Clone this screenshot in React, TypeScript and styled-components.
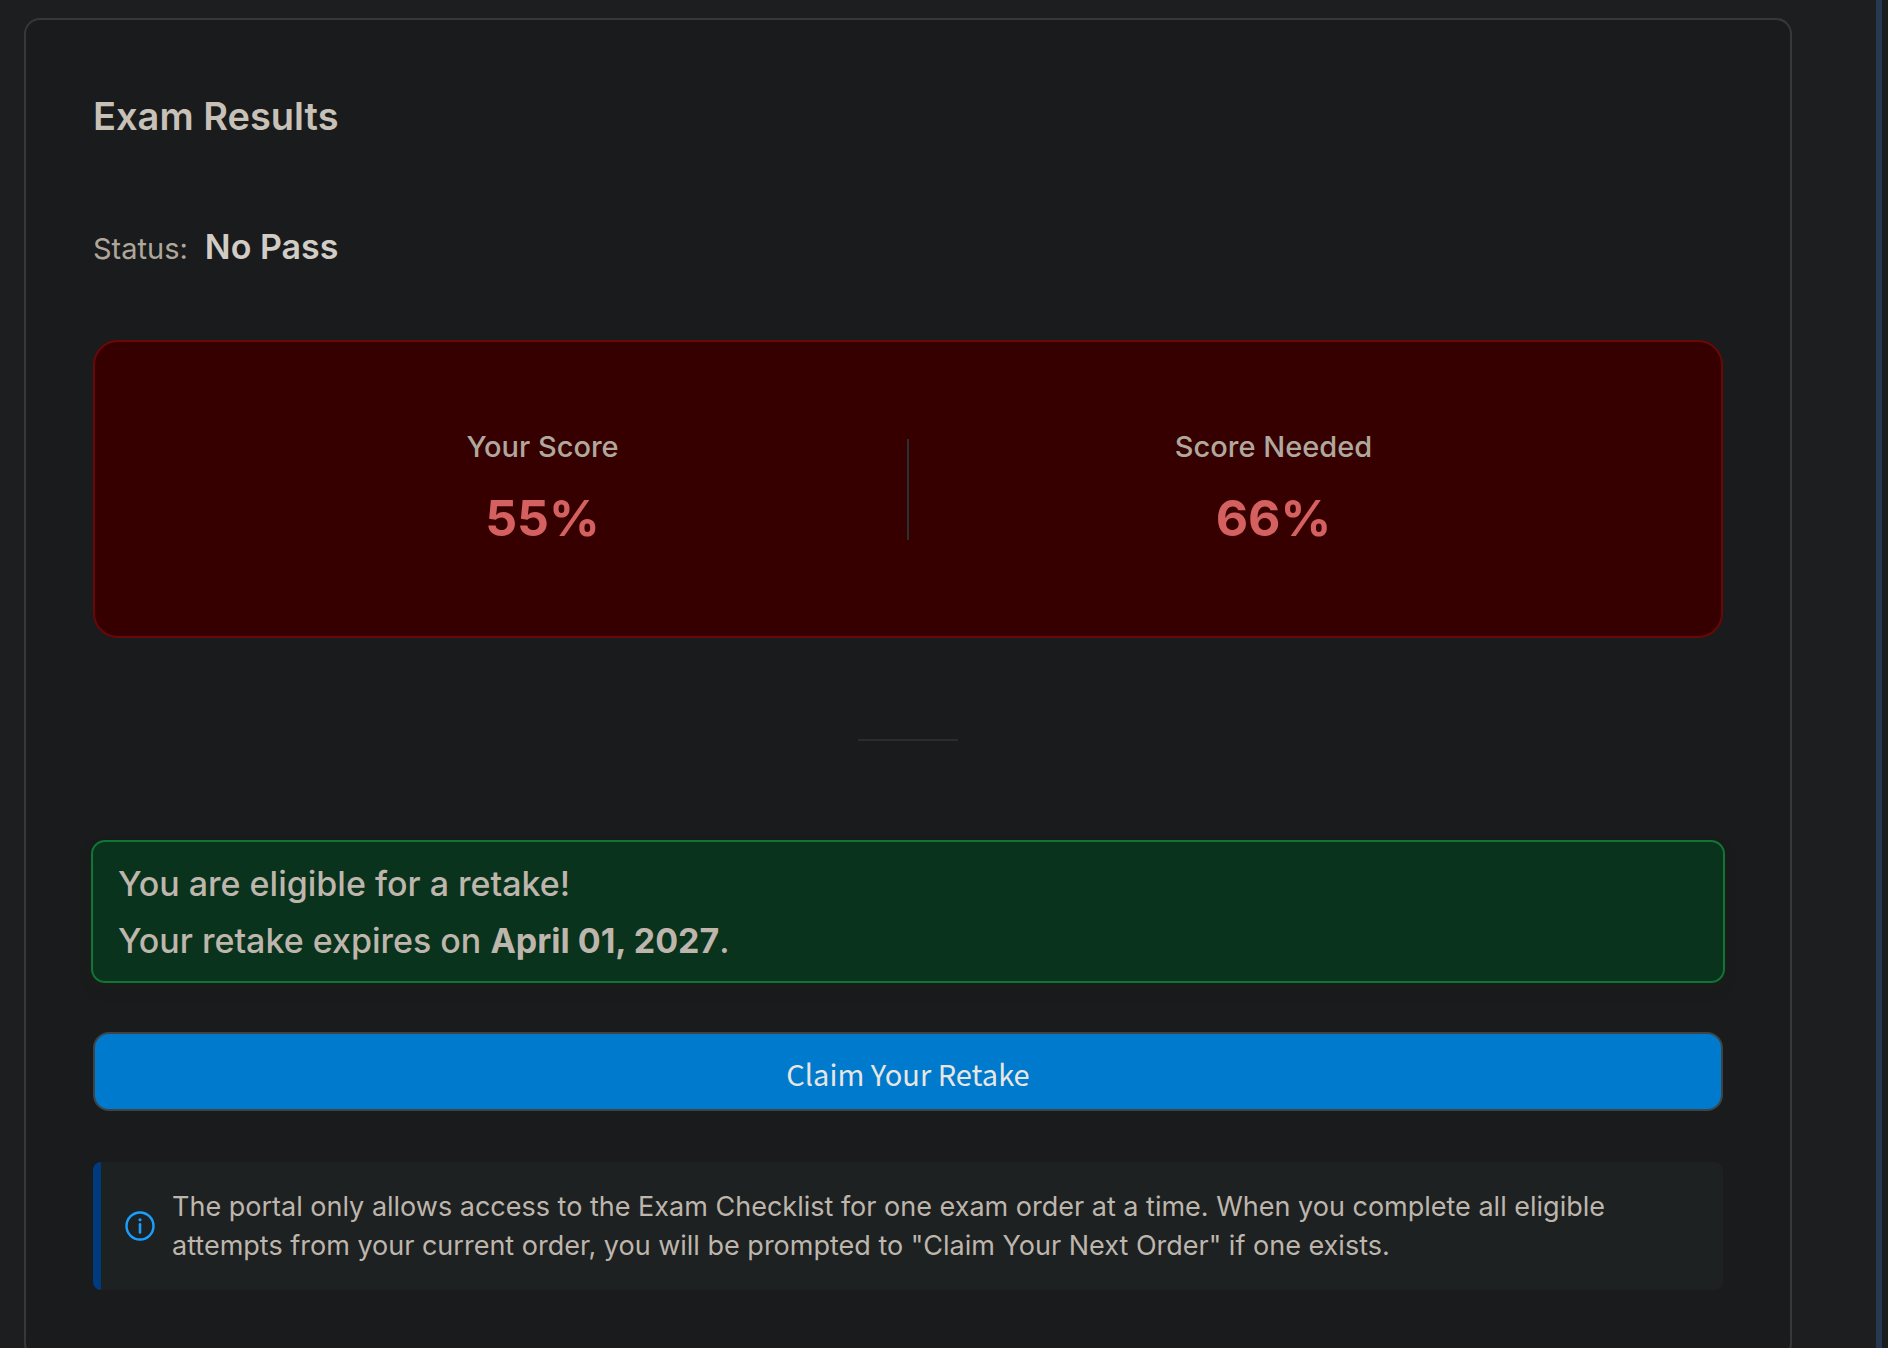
import React from "react";
import styled, { createGlobalStyle } from "styled-components";

const GlobalStyle = createGlobalStyle`
  *, *::before, *::after { box-sizing: border-box; }
  body {
    margin: 0;
    background: #1d1e20;
    color: #c8c1b8;
    font-family: Inter, "Liberation Sans", sans-serif;
  }
`;

const Page = styled.div`
  display: flex;
  height: 100vh;
  overflow: hidden;
  background: #1d1e20;
`;

const Main = styled.main`
  flex: 1;
  min-width: 0;
  padding: 18px 84px 18px 24px;
`;

const Rail = styled.aside`
  flex: none;
  width: 12px;
  border-left: 6px solid #263850;
  background: #1b1c1d;
`;

const Card = styled.section`
  display: flex;
  flex-direction: column;
  padding: 67px;
  border: 2px solid #363839;
  border-radius: 16px;
  background: #1a1b1c;
`;

const Title = styled.h1`
  margin: 0;
  font-size: 38px;
  font-weight: 600;
  line-height: 58px;
`;

const Status = styled.p`
  display: flex;
  align-items: baseline;
  gap: 17px;
  margin: 75px 0 65px;
  line-height: 53px;
`;

const StatusLabel = styled.span`
  color: #afa79b;
  font-size: 29px;
`;

const StatusValue = styled.strong`
  color: #d1ccc5;
  font-size: 34px;
  font-weight: 600;
`;

const Scores = styled.div`
  display: flex;
  align-items: center;
  padding: 83px;
  border: 2px solid #6a0808;
  border-radius: 25px;
  background: #360000;
`;

const Score = styled.div`
  display: flex;
  flex: 1;
  flex-direction: column;
  align-items: center;
  gap: 16px;
`;

const ScoreLabel = styled.span`
  color: #b0a89d;
  font-size: 29px;
  font-weight: 500;
  line-height: 43px;
`;

const ScoreValue = styled.strong`
  color: #d46060;
  font-size: 50px;
  font-weight: 700;
  line-height: 69px;
`;

const ScoreDivider = styled.div`
  width: 2px;
  height: 101px;
  background: #2b2f30;
`;

const Separator = styled.hr`
  width: 100px;
  height: 2px;
  margin: 101px auto 99px;
  border: 0;
  background: #2b2c2e;
`;

const RetakeNotice = styled.div`
  margin: 0 -2px 49px;
  padding: 13px 25px 12px;
  border: 2px solid #117534;
  border-radius: 14px;
  background: #09331d;
  box-shadow: 0 7px 12px rgba(24, 36, 24, 0.3);
  color: #beb6ac;
  font-size: 34px;
  font-weight: 500;
  line-height: 57px;

  p { margin: 0; }
  strong { font-weight: 700; }
`;

const ClaimButton = styled.button`
  height: 79px;
  padding: 4px 20px 0;
  border: 2px solid #3e4446;
  border-radius: 16px;
  background: #007acc;
  color: #e8e6e3;
  font-family: "Noto Sans CJK SC", "Noto Sans", sans-serif;
  font-size: 29px;
  font-weight: 400;
  line-height: 45px;
  cursor: pointer;
`;

const Info = styled.div`
  display: flex;
  align-items: center;
  gap: 17px;
  margin-top: 51px;
  padding: 25px 25px 25px 24px;
  border-left: 8px solid #003b80;
  border-radius: 8px;
  background: #1d2122;
  color: #beb6ac;
  font-size: 27px;
  line-height: 39px;

  svg { flex: none; }
  p { margin: 0; }
`;

const InfoIcon = () => (
  <svg width="30" height="30" viewBox="0 0 30 30" fill="none" stroke="#1a9fff" strokeLinecap="round" aria-hidden="true">
    <circle cx="15" cy="15" r="13.5" strokeWidth="2.4" />
    <path d="M15 13.2v8.2" strokeWidth="2.6" />
    <circle cx="15" cy="8.8" r="1.6" fill="#1a9fff" stroke="none" />
  </svg>
);

const scores = [
  { label: "Your Score", value: "55%" },
  { label: "Score Needed", value: "66%" },
];

export default function App() {
  return (
    <>
      <GlobalStyle />
      <Page>
        <Main>
          <Card>
            <Title>Exam Results</Title>
            <Status>
              <StatusLabel>Status:</StatusLabel>
              <StatusValue>No Pass</StatusValue>
            </Status>
            <Scores>
              {scores.map((score, i) => (
                <React.Fragment key={score.label}>
                  {i > 0 && <ScoreDivider />}
                  <Score>
                    <ScoreLabel>{score.label}</ScoreLabel>
                    <ScoreValue>{score.value}</ScoreValue>
                  </Score>
                </React.Fragment>
              ))}
            </Scores>
            <Separator />
            <RetakeNotice>
              <p>You are eligible for a retake!</p>
              <p>
                Your retake expires on <strong>April 01, 2027</strong>.
              </p>
            </RetakeNotice>
            <ClaimButton type="button">Claim Your Retake</ClaimButton>
            <Info>
              <InfoIcon />
              <p>
                The portal only allows access to the Exam Checklist for one exam order at a time. When you complete all
                eligible attempts from your current order, you will be prompted to "Claim Your Next Order" if one exists.
              </p>
            </Info>
          </Card>
        </Main>
        <Rail />
      </Page>
    </>
  );
}
